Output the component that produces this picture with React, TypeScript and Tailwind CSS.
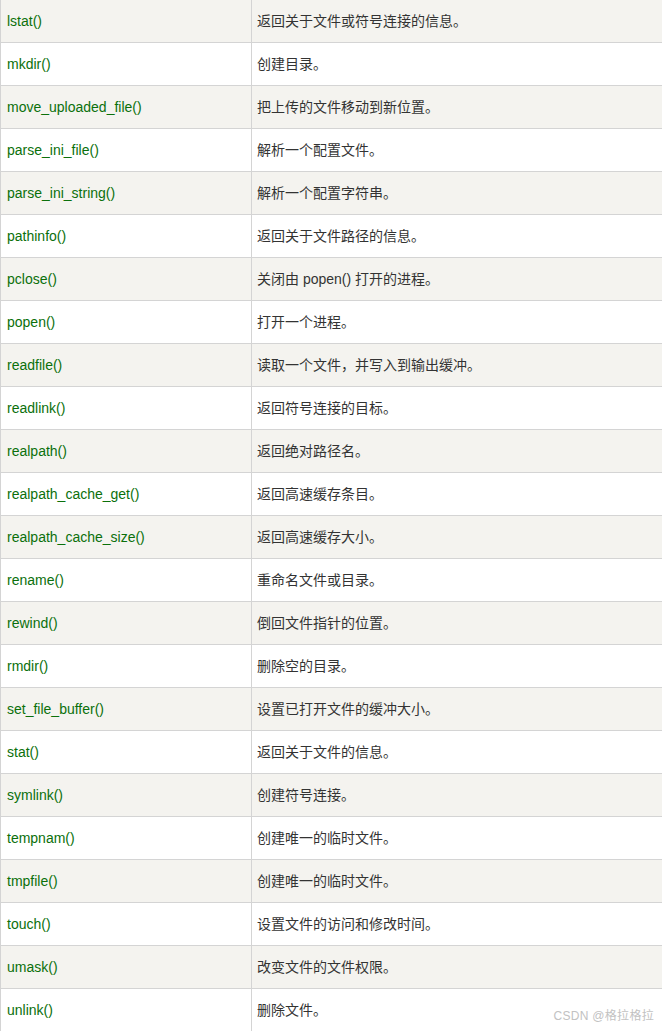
const rows: [string, string][] = [
  ['lstat()', '返回关于文件或符号连接的信息。'],
  ['mkdir()', '创建目录。'],
  ['move_uploaded_file()', '把上传的文件移动到新位置。'],
  ['parse_ini_file()', '解析一个配置文件。'],
  ['parse_ini_string()', '解析一个配置字符串。'],
  ['pathinfo()', '返回关于文件路径的信息。'],
  ['pclose()', '关闭由 popen() 打开的进程。'],
  ['popen()', '打开一个进程。'],
  ['readfile()', '读取一个文件，并写入到输出缓冲。'],
  ['readlink()', '返回符号连接的目标。'],
  ['realpath()', '返回绝对路径名。'],
  ['realpath_cache_get()', '返回高速缓存条目。'],
  ['realpath_cache_size()', '返回高速缓存大小。'],
  ['rename()', '重命名文件或目录。'],
  ['rewind()', '倒回文件指针的位置。'],
  ['rmdir()', '删除空的目录。'],
  ['set_file_buffer()', '设置已打开文件的缓冲大小。'],
  ['stat()', '返回关于文件的信息。'],
  ['symlink()', '创建符号连接。'],
  ['tempnam()', '创建唯一的临时文件。'],
  ['tmpfile()', '创建唯一的临时文件。'],
  ['touch()', '设置文件的访问和修改时间。'],
  ['umask()', '改变文件的文件权限。'],
  ['unlink()', '删除文件。'],
];

export default function App() {
  return (
    <div className="relative w-[662px] h-[1031px] overflow-hidden bg-white font-['Liberation_Sans','Noto_Sans_CJK_SC',sans-serif] text-[14px]">
      <table className="w-[663px] border-separate border-spacing-0 table-fixed">
        <tbody>
          {rows.map(([fn, desc], i) => (
            <tr key={fn} className={i % 2 === 0 ? 'bg-[#f4f3ef]' : 'bg-white'}>
              <td className="w-[252px] h-[43px] pl-[6px] border-l border-r border-b border-[#d4d4d4] text-[#0b700b]">
                {fn}
              </td>
              <td className="h-[43px] pl-[5px] border-r border-b border-[#d4d4d4] text-[#333333]">
                {desc}
              </td>
            </tr>
          ))}
        </tbody>
      </table>
      <div className="absolute right-[8px] bottom-[6px] text-[12px] text-[#c2c2c2] tracking-[0.3px]">CSDN @格拉格拉</div>
    </div>
  );
}
